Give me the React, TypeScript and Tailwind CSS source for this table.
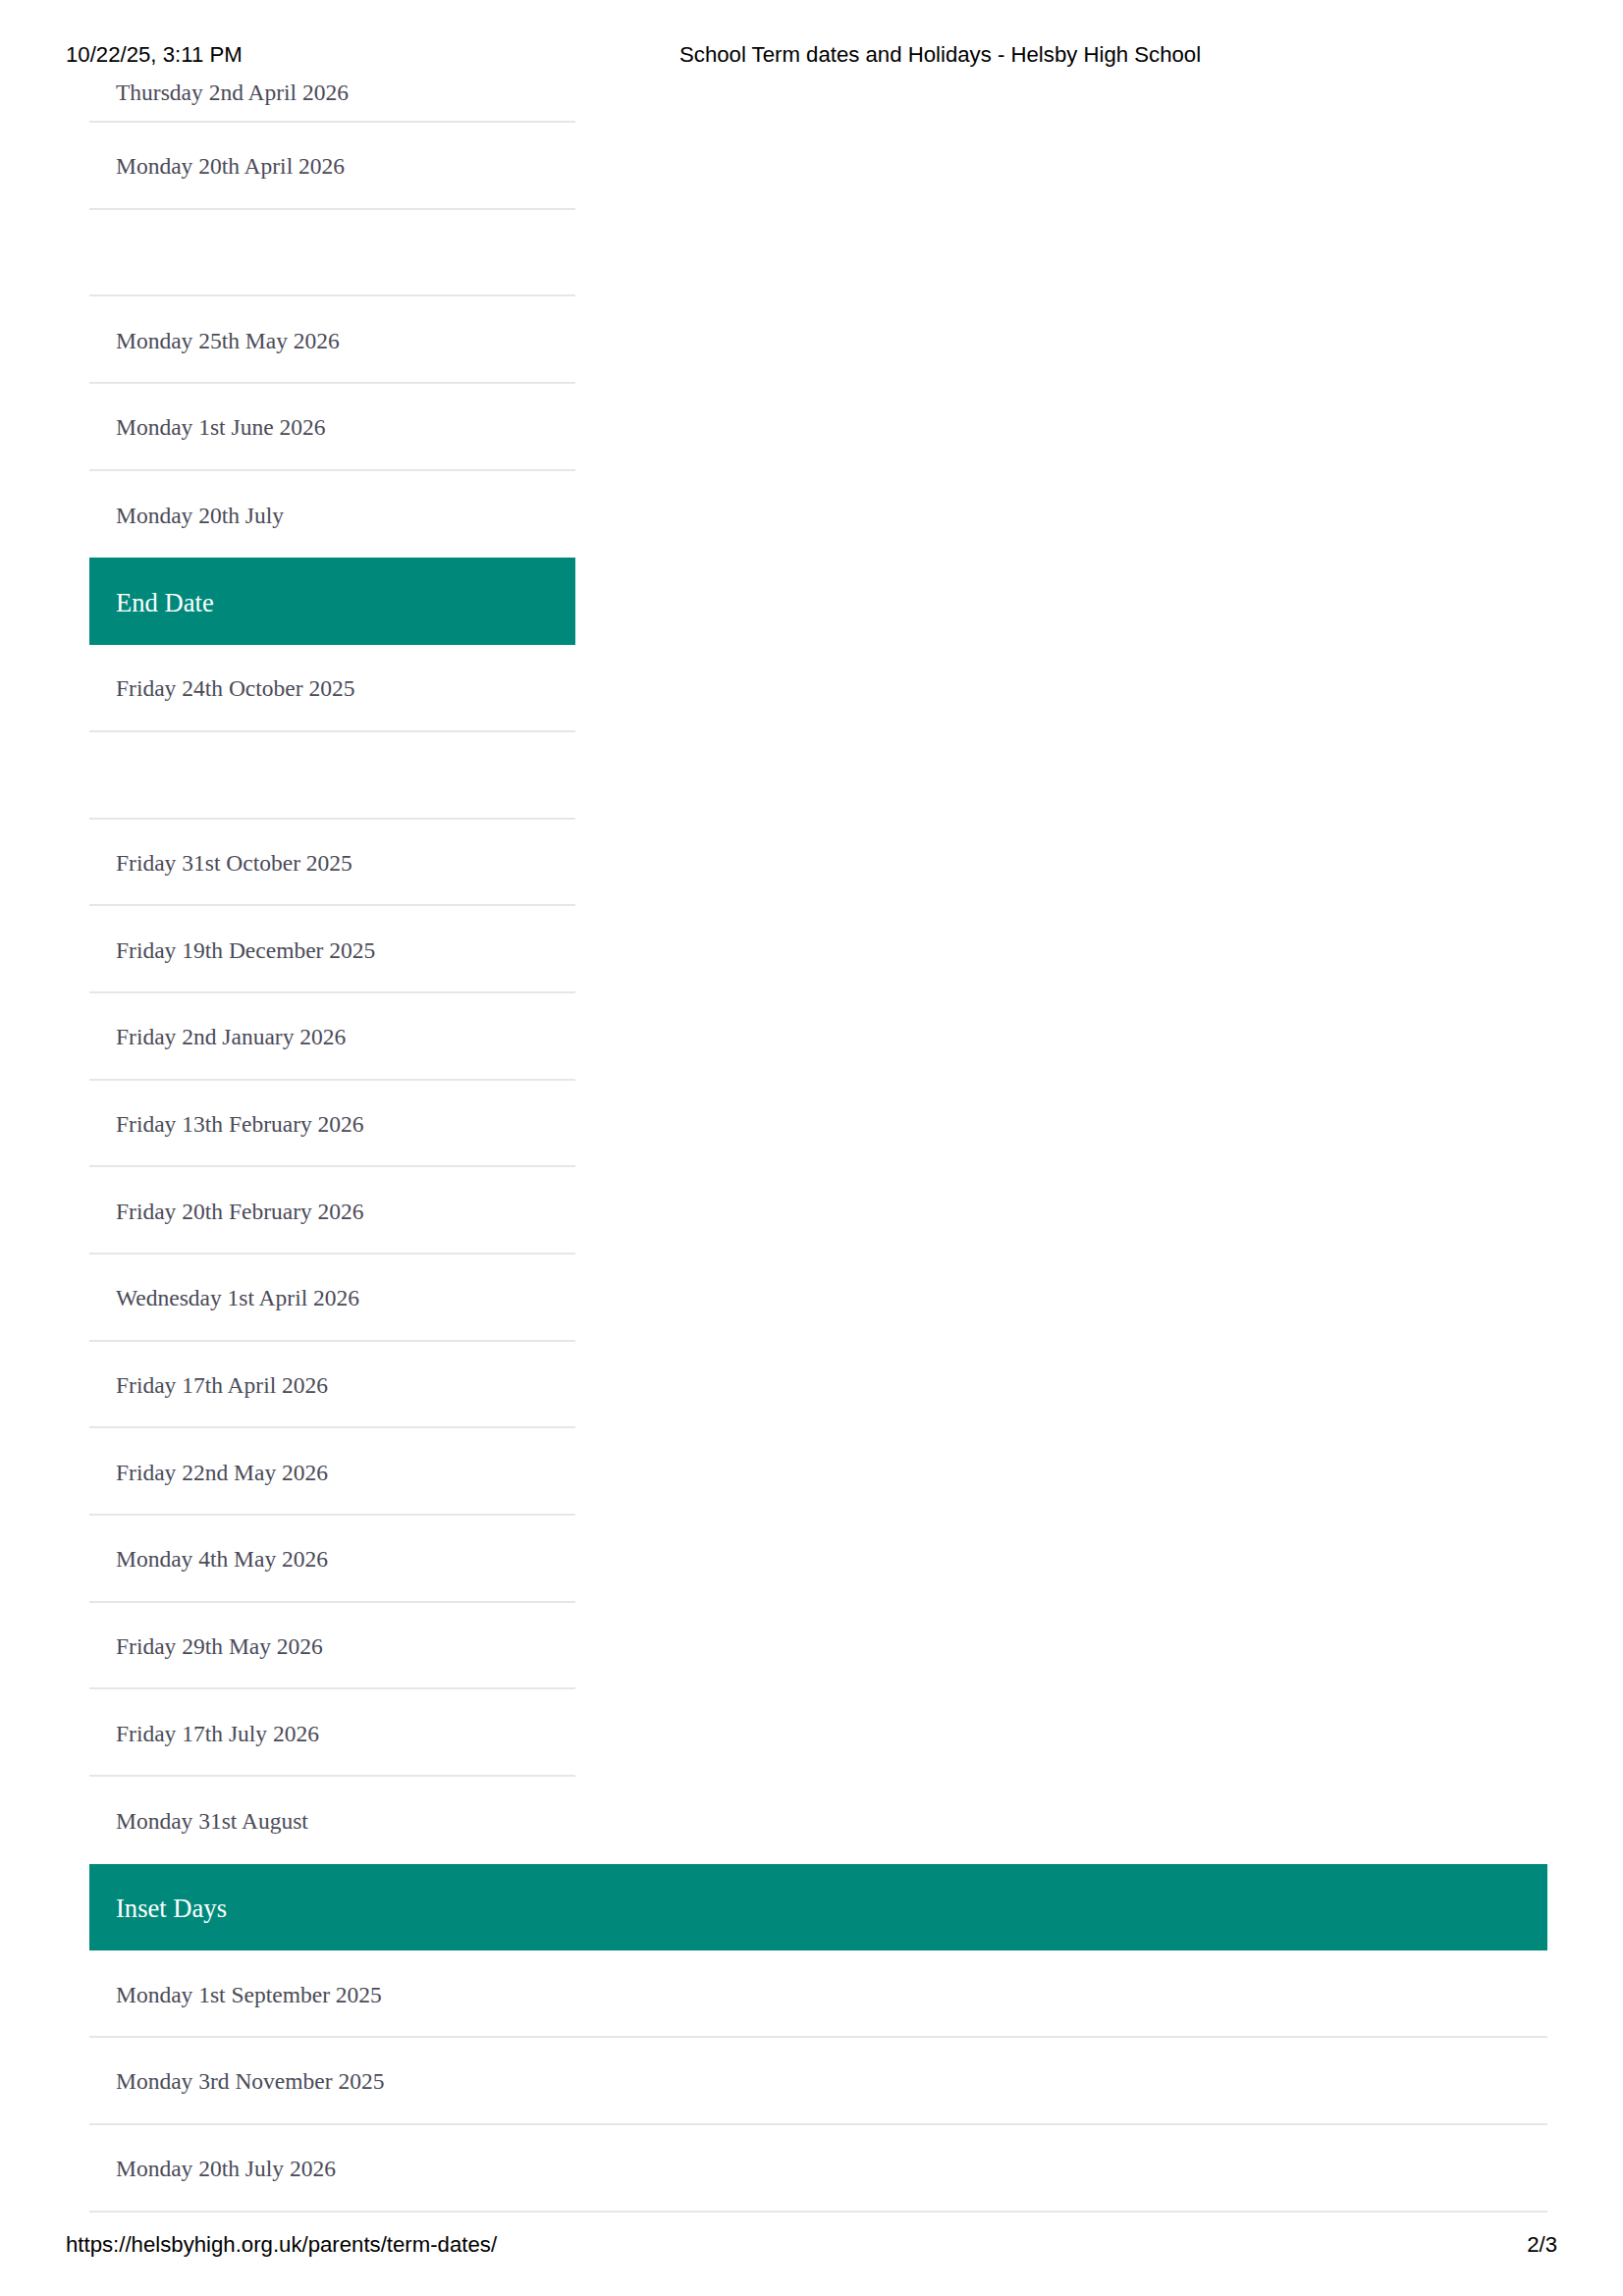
import React from "react";

const serif = { fontFamily: '"Liberation Serif", "Times New Roman", serif' };
const sans = { fontFamily: '"Liberation Sans", Arial, sans-serif' };

function Row({ text, border = true, wide = false }: { text?: string; border?: boolean; wide?: boolean }) {
  return (
    <div
      className={`${wide ? "w-[1485px]" : "w-[495px]"} h-[88.7px] flex items-center pl-[27px] pt-[2px] text-[23.5px] leading-[30px] text-[#4a4a58] ${border ? "border-b-2 border-[#e6e6e8]" : ""}`}
    >
      {text ?? ""}
    </div>
  );
}

function Header({ text, wide = false }: { text: string; wide?: boolean }) {
  return (
    <div
      className={`${wide ? "w-[1485px]" : "w-[495px]"} h-[88.7px] flex items-center pl-[27px] pt-[2px] bg-[#00897b] text-white text-[26.6px] leading-[32px]`}
    >
      {text}
    </div>
  );
}

export default function App() {
  const startRows = ["Monday 20th April 2026", "", "Monday 25th May 2026", "Monday 1st June 2026"];
  const endRows = [
    "Friday 24th October 2025",
    "",
    "Friday 31st October 2025",
    "Friday 19th December 2025",
    "Friday 2nd January 2026",
    "Friday 13th February 2026",
    "Friday 20th February 2026",
    "Wednesday 1st April 2026",
    "Friday 17th April 2026",
    "Friday 22nd May 2026",
    "Monday 4th May 2026",
    "Friday 29th May 2026",
    "Friday 17th July 2026",
  ];
  const insetRows = ["Monday 1st September 2025", "Monday 3rd November 2025", "Monday 20th July 2026"];

  return (
    <div className="w-[1653px] h-[2339px] bg-white overflow-hidden" style={serif}>
      <div className="pt-[41px] h-[70px] flex pl-[67px] text-[22.2px] leading-[30px] text-black" style={sans}>
        <div className="w-[625px]">10/22/25, 3:11 PM</div>
        <div>School Term dates and Holidays - Helsby High School</div>
      </div>

      <div className="ml-[91px] flex flex-col">
        <div className="w-[495px] h-[55px] flex items-center pb-[5px] pl-[27px] text-[23.5px] leading-[30px] text-[#4a4a58] border-b-2 border-[#e6e6e8]">
          Thursday 2nd April 2026
        </div>
        {startRows.map((t, i) => (
          <Row key={"s" + i} text={t} />
        ))}
        <Row text="Monday 20th July" border={false} />
        <Header text="End Date" />
        {endRows.map((t, i) => (
          <Row key={"e" + i} text={t} />
        ))}
        <Row text="Monday 31st August" border={false} />
        <Header text="Inset Days" wide />
        {insetRows.map((t, i) => (
          <Row key={"i" + i} text={t} wide />
        ))}
      </div>

      <div className="mt-[18px] flex justify-between pl-[67px] pr-[67px] text-[22.2px] leading-[30px] text-black" style={sans}>
        <div>https://helsbyhigh.org.uk/parents/term-dates/</div>
        <div>2/3</div>
      </div>
    </div>
  );
}
